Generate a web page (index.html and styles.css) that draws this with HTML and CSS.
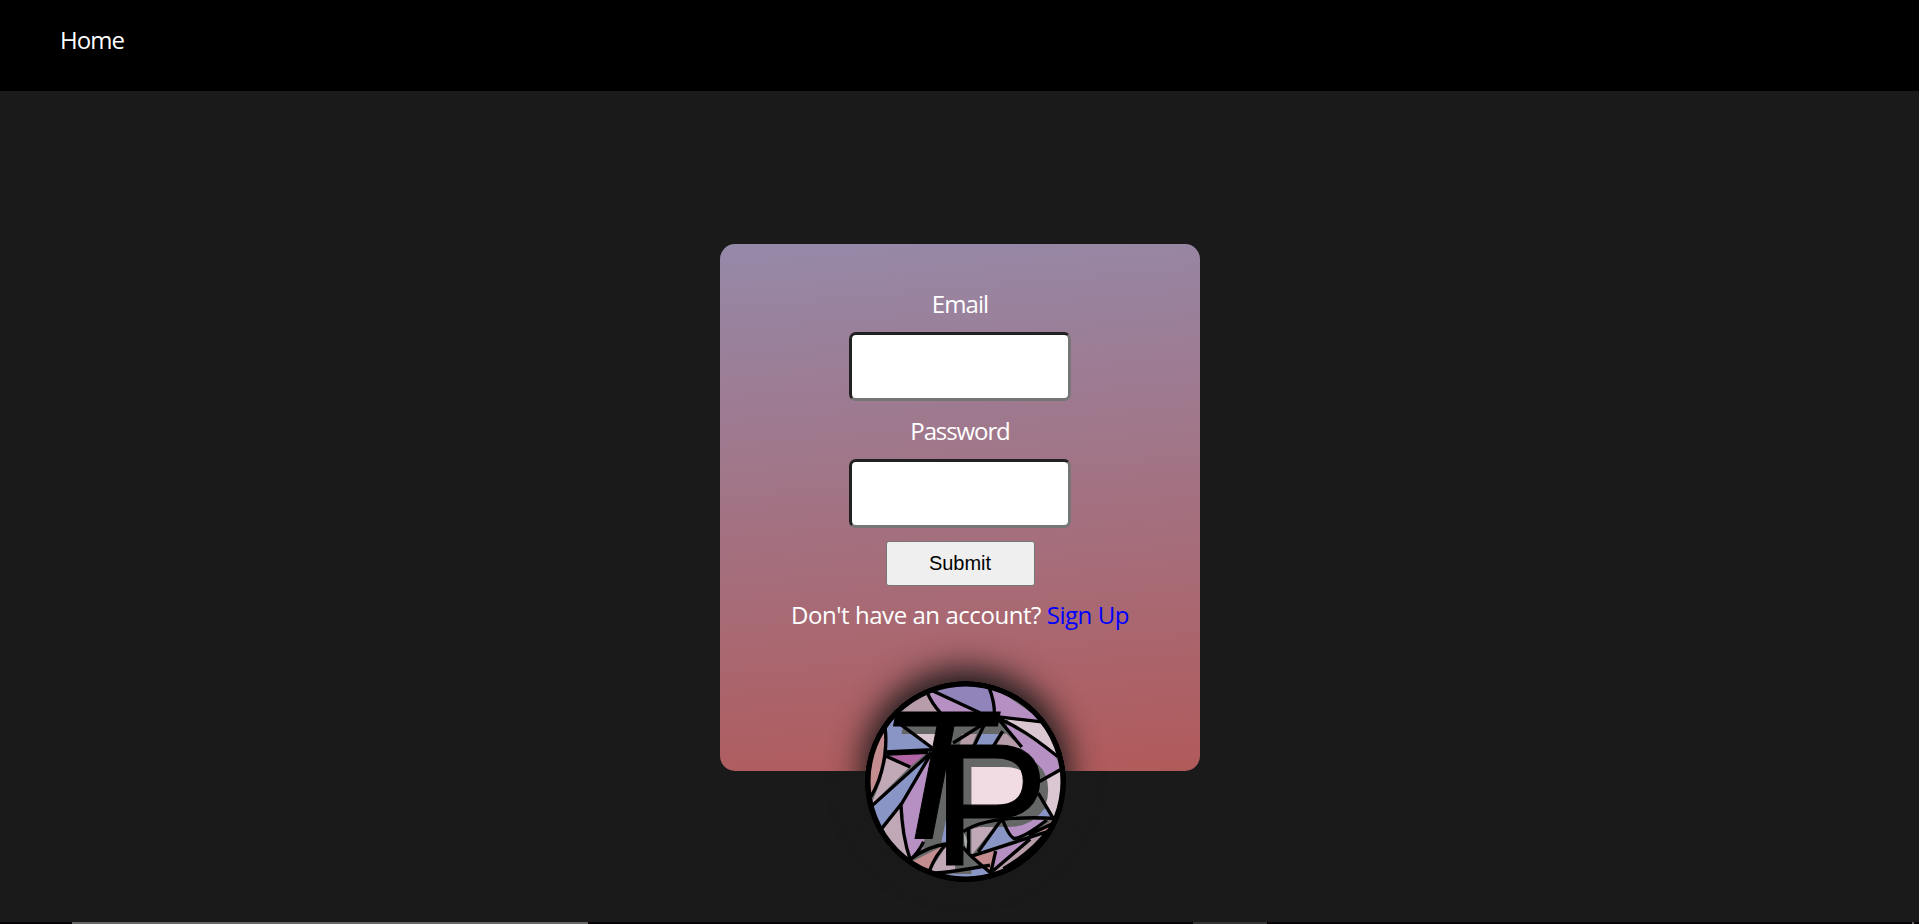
FILE: index.html
```html
<!DOCTYPE html>
<html lang="en">
<head>
<meta charset="utf-8">
<title>Login</title>
<link rel="stylesheet" href="styles.css">
</head>
<body>
<header class="navbar"><a class="nav-link" href="#">Home</a></header>
<main class="content">
  <form class="card">
    <label class="label" for="email">Email</label>
    <input class="field" id="email" type="text">
    <label class="label label-password" for="password">Password</label>
    <input class="field" id="password" type="password">
    <button class="submit" type="button">Submit</button>
    <p class="signup">Don't have an account? <a class="signup-link" href="#">Sign Up</a></p>
    <svg class="logo" viewBox="497 485 600 600">
      <defs><clipPath id="disc"><circle cx="797" cy="785" r="292"/></clipPath></defs>
      <circle cx="797" cy="785" r="300" fill="#000"/>
      <g clip-path="url(#disc)">
        <circle cx="797" cy="785" r="292" fill="#696b6b"/>
        <g fill="#b79ca9">
          <path d="M580 580L680 515L722 580z"/>
          <path d="M785 620H840L815 680H780z"/>
          <path d="M905 630L965 685H885z"/>
          <path d="M1045 930L990 957L875 1055L960 1090L1090 930z"/>
        </g>
        <g fill="#c0a8b6">
          <path d="M558 705L630 742L515 855L545 780z"/>
          <path d="M605 855L545 930L620 1015L632 1010z"/>
          <path d="M745 970L685 1060L800 1050V970z"/>
          <path d="M805 930L895 905L815 1005z"/>
        </g>
        <g fill="#dac7d1">
          <path d="M905 598L1030 610L1075 715z"/>
          <path d="M1085 750L1018 785L1014 825L1062 895L1100 800z"/>
          <path d="M605 617H720V680H695z"/>
        </g>
        <path fill="#f1dce3" d="M760 700H1000V880H760z"/>
        <g fill="#b690c3">
          <path d="M680 510H710L840 580H722z"/>
          <path d="M870 495L1030 605L900 592L882 580z"/>
          <path d="M900 600L1065 703L1080 750L1020 785L960 680z"/>
          <path d="M700 700L608 850L620 960L632 1020L670 985L740 700z"/>
          <path d="M908 900H1035L955 955H935z"/>
          <path d="M995 955L890 990L875 1060z"/>
        </g>
        <path fill="#9084bb" d="M700 510L790 480L870 500L885 580H835z"/>
        <g fill="#8995c4">
          <path d="M590 590L555 630V697L698 688L605 617z"/>
          <path d="M690 705L515 865L545 930L608 850z"/>
          <path d="M850 615H915L880 680H825z"/>
          <path d="M905 900L940 960L835 998z"/>
          <path d="M1035 865L1005 892H1060z"/>
          <path d="M735 1065L850 1042L875 1060L800 1085z"/>
        </g>
        <g fill="#c38c8e">
          <path d="M555 635L500 720L514 825Q555 750 555 635z"/>
          <path d="M745 970L635 1025L690 1052L710 1010z"/>
          <path d="M888 990L822 1010L875 1060z"/>
          <path d="M1065 898L990 940L1050 930z"/>
        </g>
        <path fill="#b265a6" d="M558 700H680L630 742z"/>
        <g class="logo-type" fill="#656767">
          <text x="557" y="982" font-size="549" font-style="italic">T</text>
          <text x="723" y="1060" font-size="522">P</text>
        </g>
        <path fill="#8995c4" d="M742 885L725 965H745z"/>
        <path fill="#656767" d="M1000 850Q985 890 900 890H800V930L905 902L1000 892L1040 855z"/>
        <g fill="none" stroke="#000" stroke-width="10">
          <path d="M683 520Q695 550 722 580M700 515L840 580M867 503Q885 550 883 585"/>
          <path d="M895 592L1025 607M895 598Q960 620 1073 711M895 598L965 682M852 612L760 670M855 612L822 680M908 635L880 680"/>
          <path d="M600 612L698 685M557 625Q562 660 556 710Q545 780 515 830M557 697L698 690M557 708L632 742M563 703L685 698M695 698L515 860"/>
          <path d="M695 700L607 850L545 928M604 850Q608 950 632 1018M632 1018Q655 1000 672 965M632 1018Q680 978 750 970M740 972Q710 1000 690 1050M690 1060Q760 1055 870 1035"/>
          <path d="M1080 750L1018 785M1014 820L1062 900M790 935Q860 885 1065 895M806 925V1000M903 900L835 995M908 900Q930 955 945 955Q975 950 1040 900M1065 907L985 945M815 1008Q900 980 1050 932M887 993L872 1060M790 980Q800 1000 875 1060M990 957L875 1055M1045 930Q990 1000 910 1045"/>
        </g>
        <path d="M793 940Q808 960 798 985Q790 965 793 940z" fill="#a5aaa5"/>
      </g>
      <g class="logo-type" fill="#000" stroke="#000" stroke-width="3">
        <text x="533" y="956" font-size="549" font-style="italic">T</text>
        <text x="698" y="1033" font-size="522">P</text>
      </g>
      <circle cx="797" cy="785" r="292" fill="none" stroke="#000" stroke-width="17"/>
    </svg>
  </form>
</main>
<footer class="bottom-edge"><span class="edge-main"></span><span class="edge-small"></span><span class="edge-tick"></span></footer>
</body>
</html>
```
FILE: styles.css
```css
* { box-sizing: border-box; }
body {
  margin: 0;
  height: 924px;
  display: flex;
  flex-direction: column;
  overflow: hidden;
  background: #1a1a1a;
  color: #fff;
  font: 24px/32px "Open Sans", "Noto Sans", sans-serif;
  letter-spacing: -0.95px;
}
.navbar { flex: none; height: 91px; padding: 24px 60px; background: #000; }
.nav-link { color: #fff; text-decoration: none; }
.content { flex: 1; display: flex; justify-content: center; align-items: flex-start; padding: 153px 0 0 1px; }
.card {
  position: relative;
  display: flex;
  flex-direction: column;
  align-items: center;
  width: 480px;
  height: 527px;
  padding-top: 44px;
  border-radius: 15px;
  background: linear-gradient(175deg, #9589a9, #b15a5a);
}
.label { height: 32px; margin-bottom: 12px; }
.label-password { letter-spacing: -1.1px; }
.field {
  width: 222px;
  height: 69px;
  margin: 0 0 14px;
  border: 3px inset #767676;
  border-radius: 7px;
  background: #fff;
}
.submit {
  width: 149px;
  height: 45px;
  margin: -1px 0 0;
  padding: 0;
  border: 1px solid #767676;
  border-radius: 3px;
  background: #efefef;
  color: #000;
  font: 20px "Liberation Sans", Arial, sans-serif;
}
.signup { margin: 13px 0 0; letter-spacing: -0.45px; white-space: nowrap; }
.signup-link { color: #00f; text-decoration: none; }
.logo {
  position: absolute;
  left: 145px;
  top: 437px;
  width: 201px;
  height: 201px;
  border-radius: 50%;
  box-shadow: 0 -9px 32px 3px #1a1a1a;
}
.logo-type { font-family: "Liberation Sans", Arial, sans-serif; letter-spacing: 0; }
.bottom-edge { flex: none; display: flex; height: 2px; padding-left: 72px; background: #080307; }
.edge-main { width: 516px; background: #666; }
.edge-small { width: 74px; margin-left: 605px; background: #333; }
.edge-tick { width: 2px; margin-left: 645px; background: #666; }
```
